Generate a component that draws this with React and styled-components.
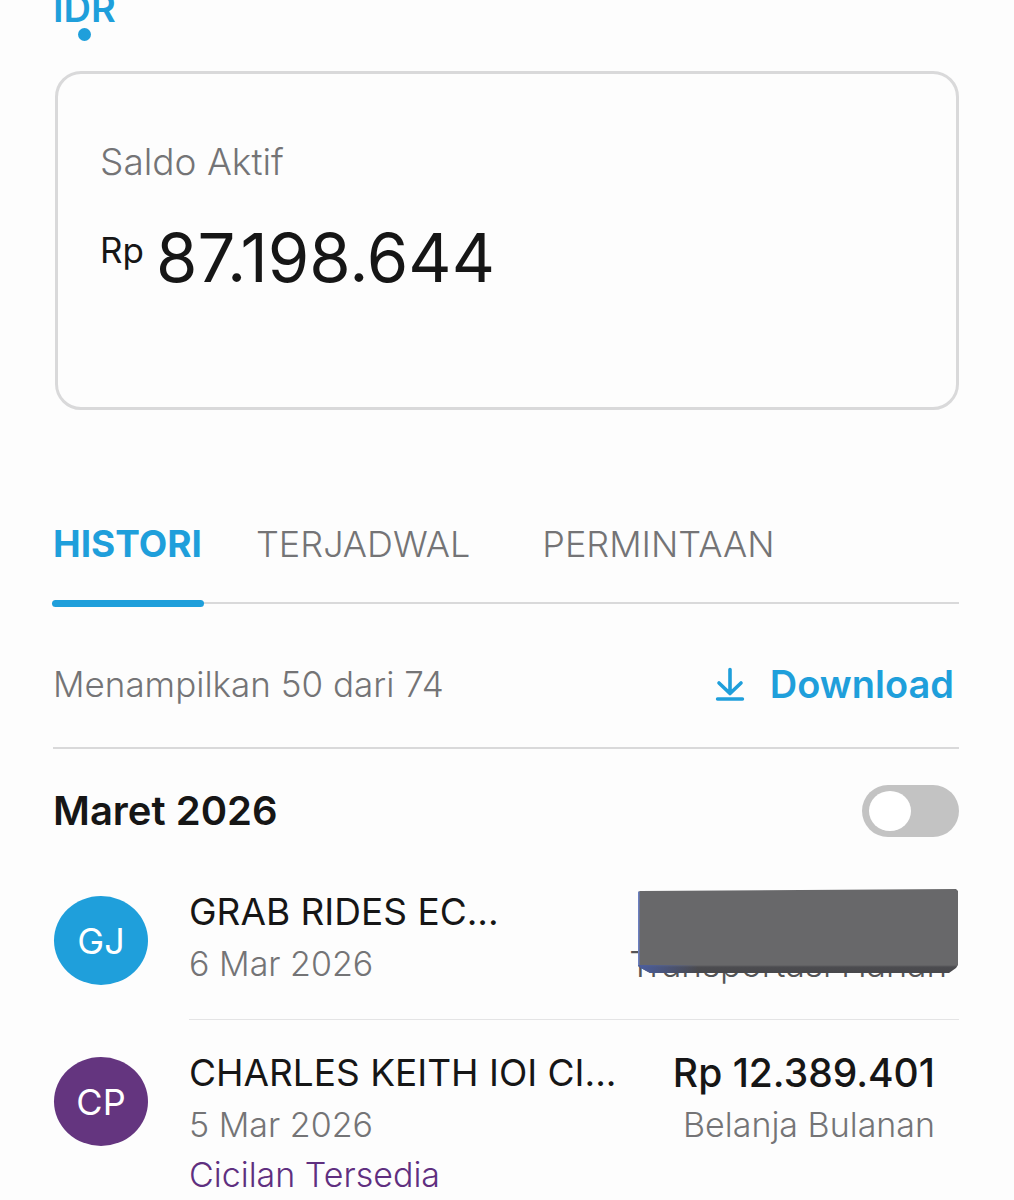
import React, { useState } from "react";
import styled, { createGlobalStyle } from "styled-components";

const blue = "#1f9fdb";
const purple = "#5f2f80";
const ink = "#161616";
const muted = "#747476";
const line = "#d9d9da";

const GlobalStyle = createGlobalStyle`
  *, *::before, *::after { box-sizing: border-box; }
  body {
    margin: 0;
    background: #fdfdfd;
    color: ${ink};
    font-family: Inter, "Liberation Sans", sans-serif;
  }
  button { font-family: inherit; }
`;

const Page = styled.main`
  padding: 0 55px 0 53px;
`;

const Currency = styled.div`
  display: inline-flex;
  flex-direction: column;
  align-items: center;
  gap: 12px;
  color: ${blue};
  font-size: 38px;
  font-weight: 600;
  line-height: 16px;
  vertical-align: top;
`;

const CurrencyDot = styled.span`
  width: 13px;
  height: 13px;
  border-radius: 50%;
  background: currentColor;
`;

const BalanceCard = styled.section`
  margin: 30px 0 0 2px;
  padding: 66px 42px 107px;
  border: 3px solid ${line};
  border-radius: 26px;
`;

const BalanceLabel = styled.h1`
  margin: 0;
  color: ${muted};
  font-size: 37px;
  font-weight: 300;
  line-height: 44px;
`;

const Balance = styled.div`
  display: flex;
  align-items: flex-start;
  gap: 12px;
  margin-top: 32px;
`;

const BalanceUnit = styled.span`
  padding-top: 12px;
  font-size: 35px;
  line-height: 44px;
`;

const BalanceValue = styled.span`
  font-size: 67px;
  line-height: 84px;
`;

const Tabs = styled.div`
  display: flex;
  gap: 54px;
  margin-top: 112px;
  border-bottom: 2px solid ${line};
`;

const Tab = styled.button`
  position: relative;
  padding: 0 ${(p) => (p.$active ? 0 : 18)}px 36px 0;
  border: 0;
  background: none;
  color: ${(p) => (p.$active ? blue : muted)};
  font-size: ${(p) => (p.$active ? 37 : 36)}px;
  font-weight: ${(p) => (p.$active ? 700 : 300)};
  line-height: 44px;
  cursor: pointer;

  &::after {
    content: "";
    display: ${(p) => (p.$active ? "block" : "none")};
    position: absolute;
    right: -2px;
    bottom: -5px;
    left: -1px;
    height: 7px;
    border-radius: 4px;
    background: ${blue};
  }
`;

const Summary = styled.div`
  display: flex;
  align-items: center;
  justify-content: space-between;
  padding: 58px 5px 41px 0;
  border-bottom: 2px solid ${line};
  color: ${muted};
  font-size: 35px;
  font-weight: 300;
  line-height: 44px;
`;

const DownloadButton = styled.button`
  display: flex;
  align-items: center;
  gap: 25px;
  padding: 0;
  border: 0;
  background: none;
  color: ${blue};
  font-size: 38px;
  font-weight: 600;
  line-height: 44px;
  cursor: pointer;
`;

const MonthHeader = styled.label`
  display: flex;
  align-items: center;
  justify-content: space-between;
  padding: 36px 0 22px;
  font-size: 40px;
  font-weight: 600;
  line-height: 52px;
`;

const Toggle = styled.input`
  appearance: none;
  display: flex;
  align-items: center;
  width: 97px;
  height: 52px;
  margin: 0;
  padding: 0 7px;
  border-radius: 26px;
  background: ${(p) => (p.checked ? blue : "#c3c3c3")};
  cursor: pointer;

  &::before {
    content: "";
    width: 42px;
    height: 40px;
    margin-left: ${(p) => (p.checked ? "auto" : "0")};
    border-radius: 50%;
    background: #fff;
  }
`;

const List = styled.ul`
  margin: 0;
  padding: 0;
  list-style: none;
`;

const Row = styled.li`
  display: grid;
  grid-template-columns: 94px 1fr;
  gap: 41px;
  padding-left: 1px;
`;

const Avatar = styled.span`
  display: flex;
  align-items: center;
  justify-content: center;
  height: 89px;
  margin-top: 37px;
  border-radius: 50%;
  background: ${(p) => p.$color};
  color: #fff;
  font-size: 36px;
`;

const RowBody = styled.div`
  display: flex;
  justify-content: space-between;
  padding: 29px 0 33px;
  border-bottom: 1px solid #e4e4e5;

  ${Row}:last-child & {
    padding-bottom: 0;
    border-bottom: 0;
  }
`;

const Column = styled.div`
  display: flex;
  flex-direction: column;
  gap: 6px;
`;

const AmountColumn = styled(Column)`
  position: relative;
  align-items: flex-end;
  padding-right: ${(p) => (p.$hidden ? 12 : 24)}px;
`;

const Title = styled.span`
  font-size: 37px;
  line-height: 48px;
`;

const Amount = styled.span`
  min-height: 48px;
  font-size: 39px;
  font-weight: 500;
  line-height: 48px;
`;

const Detail = styled.span`
  color: ${(p) => p.$color || muted};
  font-size: 34px;
  font-weight: 300;
  line-height: 44px;
`;

const MaskedDetail = styled(Detail)`
  color: #555557;
  font-size: 35px;
`;

const Mask = styled.span`
  position: absolute;
  top: 1px;
  right: 1px;
  width: 320px;
  height: 84px;
  background:
    linear-gradient(90deg, #4a5d9e, transparent 60px) 0 100% / 100% 8px no-repeat,
    linear-gradient(90deg, #6b7fc0 1px, transparent 2px),
    linear-gradient(#68686a 0 76px, #4c4c50 78px, #47474b);
  clip-path: polygon(0 3px, 2px 2px, 318px 0, 100% 2px, 100% 76px, 318px 79px, 311px 100%, 12px 100%, 1px 78px, 0 76px);
`;

const transactions = [
  {
    initials: "GJ",
    color: blue,
    title: "GRAB RIDES EC...",
    date: "6 Mar 2026",
    category: "Transportasi Harian",
    hidden: true,
  },
  {
    initials: "CP",
    color: "#64357f",
    title: "CHARLES KEITH IOI CI...",
    date: "5 Mar 2026",
    note: "Cicilan Tersedia",
    amount: "Rp 12.389.401",
    category: "Belanja Bulanan",
  },
];

const tabs = ["HISTORI", "TERJADWAL", "PERMINTAAN"];

function DownloadIcon() {
  return (
    <svg width="30" height="34" viewBox="0 0 30 34" fill="none" stroke="currentColor" strokeLinecap="round" strokeLinejoin="round" aria-hidden="true">
      <path d="M15 2.5V26.5M4 16L15 26.5L26 16" strokeWidth="3.6" />
      <path d="M2.5 32H27.5" strokeWidth="3.4" />
    </svg>
  );
}

function Transaction({ item }) {
  return (
    <Row>
      <Avatar $color={item.color}>{item.initials}</Avatar>
      <RowBody>
        <Column>
          <Title>{item.title}</Title>
          <Detail>{item.date}</Detail>
          {item.note && <Detail $color={purple}>{item.note}</Detail>}
        </Column>
        <AmountColumn $hidden={item.hidden}>
          <Amount>{item.amount}</Amount>
          {item.hidden ? (
            <MaskedDetail>{item.category}</MaskedDetail>
          ) : (
            <Detail>{item.category}</Detail>
          )}
          {item.hidden && <Mask />}
        </AmountColumn>
      </RowBody>
    </Row>
  );
}

export default function App() {
  const [active, setActive] = useState(tabs[0]);
  const [on, setOn] = useState(false);

  return (
    <Page>
      <GlobalStyle />
      <Currency>
        IDR
        <CurrencyDot />
      </Currency>
      <BalanceCard>
        <BalanceLabel>Saldo Aktif</BalanceLabel>
        <Balance>
          <BalanceUnit>Rp</BalanceUnit>
          <BalanceValue>87.198.644</BalanceValue>
        </Balance>
      </BalanceCard>
      <Tabs role="tablist">
        {tabs.map((name) => (
          <Tab
            key={name}
            type="button"
            role="tab"
            aria-selected={name === active}
            $active={name === active}
            onClick={() => setActive(name)}
          >
            {name}
          </Tab>
        ))}
      </Tabs>
      <Summary>
        <span>Menampilkan 50 dari 74</span>
        <DownloadButton type="button">
          <DownloadIcon />
          Download
        </DownloadButton>
      </Summary>
      <MonthHeader>
        Maret 2026
        <Toggle type="checkbox" role="switch" checked={on} onChange={(e) => setOn(e.target.checked)} />
      </MonthHeader>
      <List>
        {transactions.map((item) => (
          <Transaction key={item.initials} item={item} />
        ))}
      </List>
    </Page>
  );
}
